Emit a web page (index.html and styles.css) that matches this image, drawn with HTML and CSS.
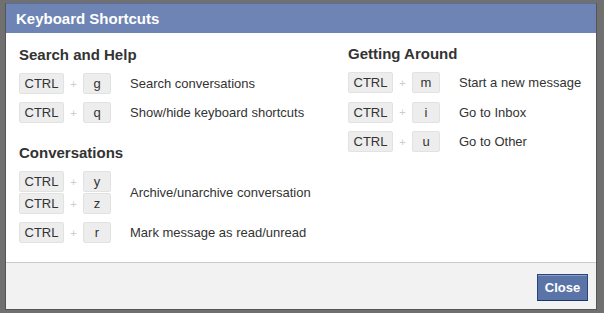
FILE: index.html
```html
<!DOCTYPE html>
<html lang="en">
<head>
  <meta charset="UTF-8">
  <meta name="viewport" content="width=device-width, initial-scale=1.0">
  <title>Keyboard Shortcuts</title>
  <link rel="stylesheet" href="styles.css">
</head>
<body>
  <div class="frame">
    <div class="dialog">
      <div class="dialog-title">Keyboard Shortcuts</div>
      <div class="dialog-body">
        <div class="column">
          <h3>Search and Help</h3>
          <div class="row">
            <div class="combos">
              <div class="combo"><span class="key ctrl">CTRL</span><span class="plus">+</span><span class="key">g</span></div>
            </div>
            <span class="desc">Search conversations</span>
          </div>
          <div class="row">
            <div class="combos">
              <div class="combo"><span class="key ctrl">CTRL</span><span class="plus">+</span><span class="key">q</span></div>
            </div>
            <span class="desc">Show/hide keyboard shortcuts</span>
          </div>

          <h3 class="spaced">Conversations</h3>
          <div class="row">
            <div class="combos">
              <div class="combo"><span class="key ctrl">CTRL</span><span class="plus">+</span><span class="key">y</span></div>
              <div class="combo"><span class="key ctrl">CTRL</span><span class="plus">+</span><span class="key">z</span></div>
            </div>
            <span class="desc">Archive/unarchive conversation</span>
          </div>
          <div class="row">
            <div class="combos">
              <div class="combo"><span class="key ctrl">CTRL</span><span class="plus">+</span><span class="key">r</span></div>
            </div>
            <span class="desc">Mark message as read/unread</span>
          </div>
        </div>

        <div class="column right">
          <h3>Getting Around</h3>
          <div class="row">
            <div class="combos">
              <div class="combo"><span class="key ctrl">CTRL</span><span class="plus">+</span><span class="key">m</span></div>
            </div>
            <span class="desc">Start a new message</span>
          </div>
          <div class="row">
            <div class="combos">
              <div class="combo"><span class="key ctrl">CTRL</span><span class="plus">+</span><span class="key">i</span></div>
            </div>
            <span class="desc">Go to Inbox</span>
          </div>
          <div class="row">
            <div class="combos">
              <div class="combo"><span class="key ctrl">CTRL</span><span class="plus">+</span><span class="key">u</span></div>
            </div>
            <span class="desc">Go to Other</span>
          </div>
        </div>
      </div>
      <div class="dialog-footer">
        <button class="close-btn">Close</button>
      </div>
    </div>
  </div>
  <div class="page-behind">Wondrr • www.wondrr.com</div>
</body>
</html>
```

FILE: styles.css
```css
body, html {
  margin: 0;
  padding: 0;
  width: 100%;
  height: 100%;
  overflow: hidden;
  background-color: #fff;
  font-family: "Liberation Sans", Arial, sans-serif;
  color: #333;
}
.frame {
  background: #707070;
  padding: 3px 7px 3px 5px;
}
.dialog {
  background: #fff;
  border: 1px solid #555;
  border-width: 0 1px 1px 1px;
}
.dialog-title {
  height: 30px;
  line-height: 30px;
  background: #6d84b4;
  border-top: 1px solid #5a6f9f;
  box-sizing: border-box;
  padding-left: 10px;
  color: #fff;
  font-size: 15px;
  font-weight: bold;
}
.dialog-body {
  height: 229px;
  box-sizing: border-box;
  padding: 13px 0 0 13px;
  display: flex;
}
.column {
  width: 329px;
}
.column.right {
  width: auto;
}
h3 {
  margin: 0 0 5px 0;
  font-size: 15px;
  line-height: 18px;
  font-weight: bold;
  color: #333;
}
.right h3 {
  margin-top: -1px;
}
h3.spaced {
  margin-top: 17px;
}
.row {
  display: flex;
  align-items: center;
  padding: 4px 0;
  min-height: 21px;
}
.right .row {
  padding: 4px 0 4.5px;
}
.combos {
  display: flex;
  flex-direction: column;
  gap: 1px;
  width: 111px;
  flex-shrink: 0;
}
.combo {
  display: flex;
  align-items: center;
}
.key {
  display: inline-block;
  box-sizing: border-box;
  width: 28px;
  height: 21px;
  line-height: 20px;
  text-align: center;
  background: #ededed;
  border: 1px solid #e2e2e2;
  border-radius: 2px;
  font-size: 13px;
  color: #333;
}
.key.ctrl {
  width: 45px;
}
.plus {
  width: 19px;
  text-align: center;
  font-size: 11px;
  color: #ccc;
}
.desc {
  font-size: 13px;
  color: #333;
}
.dialog-footer {
  height: 47px;
  box-sizing: border-box;
  border-top: 1px solid #ccc;
  background: #f2f2f2;
  display: flex;
  justify-content: flex-end;
  align-items: flex-start;
  padding: 11px 8px 0 0;
}
.close-btn {
  width: 51px;
  height: 27px;
  background: #5b74a8;
  border: 1px solid #29447e;
  border-bottom-color: #1a356e;
  box-shadow: inset 0 1px 0 #8a9cc2;
  color: #fff;
  font-family: "Liberation Sans", Arial, sans-serif;
  font-size: 13px;
  font-weight: bold;
  padding: 0;
}
.page-behind {
  margin: -1px 0 0 40px;
  font-size: 15px;
  font-weight: bold;
  color: #1c2a5e;
}
```
